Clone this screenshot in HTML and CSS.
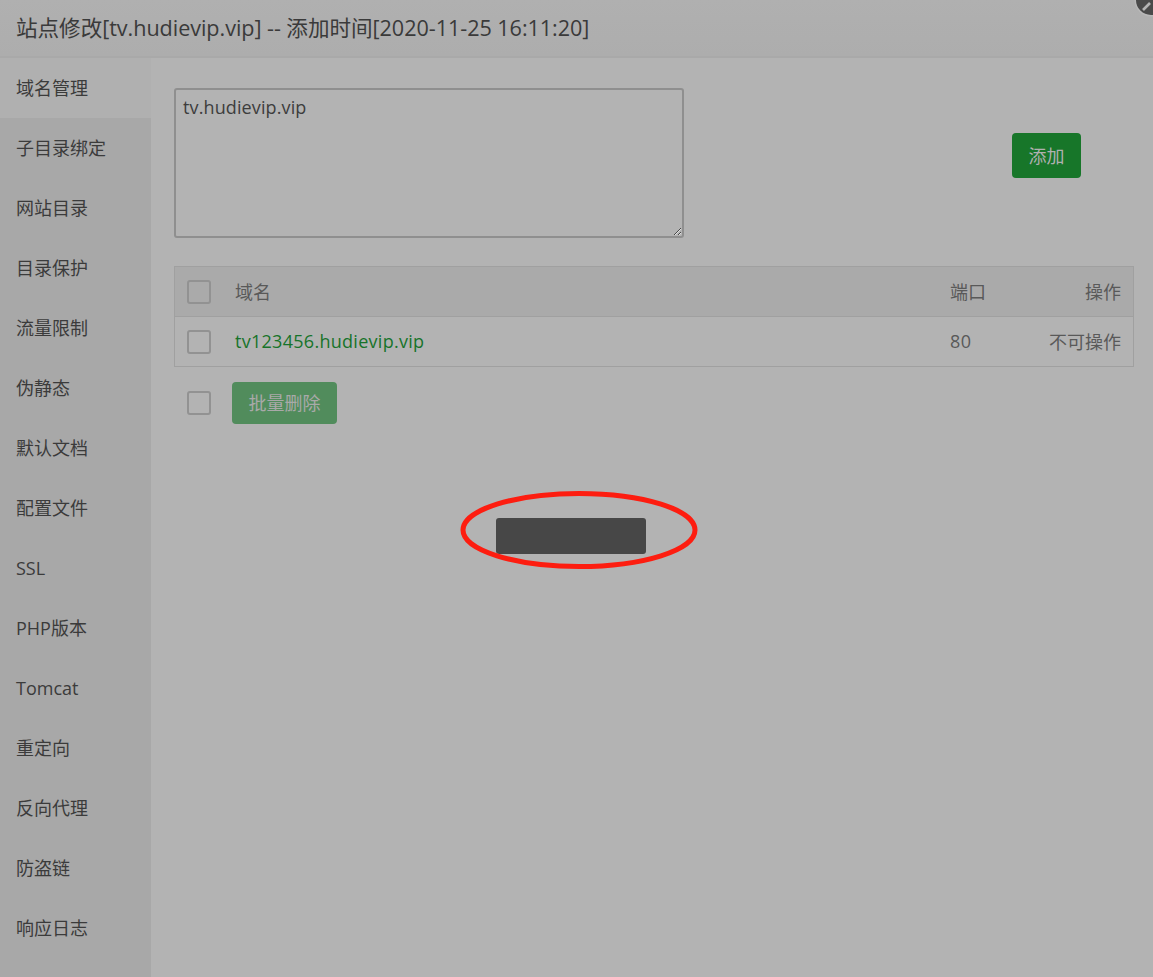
FILE: index.html
```html
<!DOCTYPE html>
<html lang="zh">
<head>
<meta charset="utf-8">
<title>站点修改</title>
<link rel="stylesheet" href="styles.css">
</head>
<body>
<div class="dialog">
  <header class="title">站点修改[tv.hudievip.vip] -- 添加时间[2020-11-25 16:11:20]</header>
  <svg class="close" width="24" height="20" viewBox="0 0 24 20">
    <circle cx="22" cy="0" r="16.5" fill="#b8b8b8"/>
    <circle cx="22" cy="0" r="15" fill="#4a4a4a"/>
    <path d="M14 10L21 3" stroke="#b4b4b4" stroke-width="2.6" fill="none"/>
  </svg>
  <div class="body">
    <nav class="side">
      <div class="item active">域名管理</div>
      <div class="item">子目录绑定</div>
      <div class="item">网站目录</div>
      <div class="item">目录保护</div>
      <div class="item">流量限制</div>
      <div class="item">伪静态</div>
      <div class="item">默认文档</div>
      <div class="item">配置文件</div>
      <div class="item">SSL</div>
      <div class="item">PHP版本</div>
      <div class="item">Tomcat</div>
      <div class="item">重定向</div>
      <div class="item">反向代理</div>
      <div class="item">防盗链</div>
      <div class="item">响应日志</div>
    </nav>
    <main class="main">
      <div class="add-row">
        <textarea class="domains">tv.hudievip.vip</textarea>
        <button class="btn add">添加</button>
      </div>
      <div class="table">
        <div class="row head">
          <span class="cb"></span>
          <span class="name">域名</span>
          <span class="port">端口</span>
          <span class="op">操作</span>
        </div>
        <div class="row">
          <span class="cb"></span>
          <span class="name link">tv123456.hudievip.vip</span>
          <span class="port num">80</span>
          <span class="op">不可操作</span>
        </div>
      </div>
      <div class="batch">
        <span class="cb"></span>
        <button class="btn del">批量删除</button>
      </div>
      <div class="toast-wrap">
        <div class="toast"></div>
      </div>
    </main>
  </div>
  <svg class="mark" width="240" height="80" viewBox="0 0 240 80">
    <ellipse cx="119" cy="39" rx="116" ry="36.5" fill="none" stroke="#fd1d10" stroke-width="5"/>
  </svg>
</div>
</body>
</html>
```
FILE: styles.css
```css
* { box-sizing: border-box; }
html, body { margin: 0; height: 100%; overflow: hidden; }
body {
  font-family: "Open Sans", "Noto Sans CJK SC", sans-serif;
  background: #b3b3b3;
  color: #3d3d3d;
}
.dialog { position: relative; width: 1153px; height: 977px; display: flex; flex-direction: column; }
.title {
  height: 58px;
  padding-left: 16px;
  line-height: 55px;
  font-size: 21.6px;
  letter-spacing: -0.05px;
  color: #3a3a3a;
  background: linear-gradient(#b0b0b0, #adadad);
  border-bottom: 2px solid #a9a9a9;
  white-space: nowrap;
}
.close { position: absolute; top: 0; right: 0; }
.body { flex: 1; display: flex; min-height: 0; }
.side { width: 151px; background: #a8a8a8; flex: none; }
.item { height: 60px; line-height: 60px; padding-left: 16px; font-size: 18px; color: #3b3b3b; }
.item.active { background: #b0b0b0; }
.main { flex: 1; padding: 30px 19px 0 23px; }
.add-row { display: flex; align-items: flex-start; height: 150px; }
.domains {
  width: 510px;
  height: 150px;
  padding: 4px 7px;
  font: 18px/26px "Open Sans", sans-serif;
  letter-spacing: 0.12px;
  color: #3d3d3d;
  background: #b3b3b3;
  border: 2px solid #8f8f8f;
  border-radius: 3px;
  resize: both;
  outline: none;
}
.btn { border: 0; border-radius: 4px; color: #b0b0b0; font: 18px "Noto Sans CJK SC", sans-serif; padding: 0 0 2px; }
.add { width: 69px; height: 45px; margin: 45px 0 0 328px; background: #177629; }
.table { margin-top: 28px; border: 1px solid #a0a0a0; }
.row { display: flex; align-items: center; height: 49px; font-size: 18px; color: #595959; padding-right: 12px; }
.row.head { height: 50px; background: #aaaaaa; border-bottom: 1px solid #a0a0a0; }
.row .name, .row .port, .row .op { position: relative; top: -1px; }
.cb { width: 24px; height: 24px; flex: none; margin-left: 12px; border: 2px solid #929292; border-radius: 3px; }
.name { flex: 1; margin-left: 24px; }
.link { color: #17732a; letter-spacing: 0.28px; }
.port { width: 60px; margin-left: 1px; margin-right: -1px; }
.num { letter-spacing: 0.5px; }
.op { width: 112px; text-align: right; }
.batch { display: flex; align-items: center; margin-top: 15px; height: 42px; padding-left: 1px; }
.del { width: 105px; height: 42px; margin-left: 21px; background: #518c5c; color: #a9a9a9; }
.toast-wrap { display: flex; margin-top: 94px; padding-left: 322px; }
.toast { width: 150px; height: 36px; background: #474747; border-radius: 3px; }
.mark { position: absolute; left: 460px; top: 491px; }
```
